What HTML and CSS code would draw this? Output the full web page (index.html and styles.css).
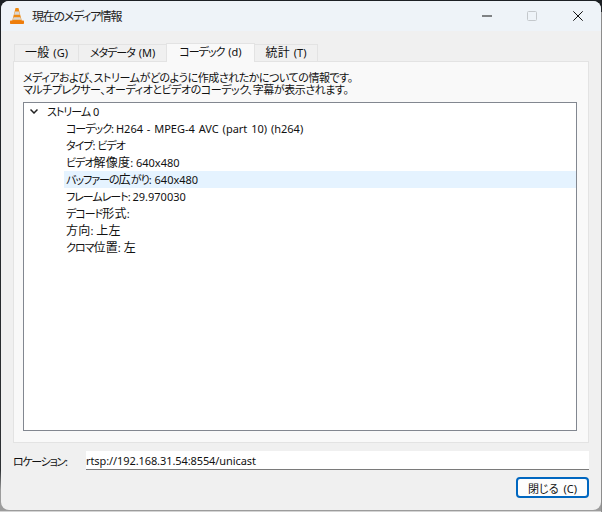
FILE: index.html
```html
<!DOCTYPE html>
<html lang="ja">
<head>
<meta charset="utf-8">
<title>現在のメディア情報</title>
<link rel="stylesheet" href="styles.css">
</head>
<body>
<div class="window">
  <header class="titlebar">
    <svg class="vlc" viewBox="0 0 14 16" width="14" height="16">
      <path d="M5.500 0h3l3.300 13H2.200z" fill="#f08a10"/>
      <path d="M5 3.600h4l.9 3.200H4.100z" fill="#d9d6d2"/>
      <path d="M3.600 9.300h6.800l.8 2.400H2.800z" fill="#d9d6d2"/>
      <path d="M1 12.500h12c.6 0 1 .4 1 1V15c0 .6-.4 1-1 1H1c-.6 0-1-.4-1-1v-1.500c0-.6.4-1 1-1z" fill="#ee7d0c"/>
    </svg>
    <span class="title">現在のメディア情報</span>
    <div class="controls">
      <svg class="min" width="10" height="10" viewBox="0 0 10 10"><path d="M0 5h10" stroke="#111" stroke-width="1"/></svg>
      <svg width="10" height="10" viewBox="0 0 10 10"><rect x=".5" y=".5" width="9" height="9" rx="1" fill="none" stroke="#c4c8cc"/></svg>
      <svg width="10" height="10" viewBox="0 0 10 10"><path d="M.3.300l9.400 9.400M9.700.300L.3 9.700" stroke="#111" stroke-width="1" fill="none"/></svg>
    </div>
  </header>
  <main class="content">
    <nav class="tabs">
      <div class="tab t1"><span class="kanji">一般</span> (G)</div>
      <div class="tab t2"><span class="kana">メタデータ</span> (M)</div>
      <div class="tab t3 active"><span class="kana">コーデック</span> (d)</div>
      <div class="tab t4"><span class="kanji">統計</span> (T)</div>
    </nav>
    <section class="pane">
      <p class="desc">メディアおよび、ストリームがどのように作成されたかについての情報です。<br>マルチプレクサー、オーディオとビデオのコーデック、字幕が表示されます。</p>
      <div class="tree">
        <div class="row root">
          <svg class="chev" width="8" height="5" viewBox="0 0 8 5"><path d="M.5.500L4 4 7.500.500" fill="none" stroke="#222" stroke-width="1.500"/></svg>
          <span><span class="kana">ストリーム</span> 0</span>
        </div>
        <div class="row leaf"><span class="kana">コーデック:</span> <span class="val">H264 - MPEG-4 AVC (part 10) (h264)</span></div>
        <div class="row leaf"><span class="kana">タイプ:</span> <span class="kana">ビデオ</span></div>
        <div class="row leaf"><span class="kana">ビデオ</span><span class="kanji">解像度</span>: 640x480</div>
        <div class="row leaf hover"><span class="kana">バッファーの</span><span class="kanji">広</span><span class="kana">がり</span>: 640x480</div>
        <div class="row leaf"><span class="kana">フレームレート:</span> 29.970030</div>
        <div class="row leaf"><span class="kana">デコード</span><span class="kanji">形式</span>:</div>
        <div class="row leaf"><span class="kanji">方向</span>: <span class="kanji">上左</span></div>
        <div class="row leaf"><span class="kana">クロマ</span><span class="kanji">位置</span>: <span class="kanji">左</span></div>
      </div>
    </section>
    <div class="location">
      <label class="loc-label"><span class="kana">ロケーション:</span></label>
      <div class="loc-input">rtsp://192.168.31.54:8554/unicast</div>
    </div>
    <div class="actions"><button class="close">閉じる (C)</button></div>
  </main>
</div>
</body>
</html>
```
FILE: styles.css
```css
* { box-sizing: border-box; }
html, body { margin: 0; height: 100%; }
body { width: 602px; height: 512px; overflow: hidden; background: linear-gradient(#8c8c8c, #8c8c8c) right 0 top 12px / 1px 100% no-repeat, linear-gradient(#1c2024 0, #2e3134 470px, #9c9c9c 490px, #9c9c9c 511px, #d4d4d4 511px); font-family: "Noto Sans", "Noto Sans CJK JP", sans-serif; font-size: 11px; color: #111; font-feature-settings: "palt"; font-kerning: normal; }
.window { margin-left: 1px; width: 600px; height: 509px; margin-top: 1px; background: #f0f0f0; border-radius: 8px; overflow: hidden; display: flex; flex-direction: column; }
.titlebar { height: 30px; background: #eef3f8; display: flex; align-items: center; padding-left: 9px; flex: none; }
.vlc { flex: none; }
.title { margin-left: 8px; font-size: 12px; color: #222; letter-spacing: -1.3px; }
.controls { margin-left: auto; display: flex; align-items: center; gap: 36px; padding-right: 18px; }
.min { margin-right: -1px; }
.content { flex: 1; padding: 13px 12px 0; display: flex; flex-direction: column; min-height: 0; }
.tabs { display: flex; height: 17px; padding-left: 2px; align-items: flex-end; flex: none; }
.tab { height: 17px; background: #f0f0f0; border: 1px solid #e3e3e3; border-bottom: 0; margin-left: -1px; line-height: 15px; white-space: nowrap; text-align: center; flex: none; word-spacing: 1px; }
.t1 { width: 65px; }
.t2 { width: 89px; }
.t3 { width: 89px; }
.t4 { width: 64px; }
.tab.active { height: 19px; background: #f9f9f9; position: relative; z-index: 1; margin-bottom: -1px; line-height: 16px; }
.kana { letter-spacing: -1px; }
.kanji { font-size: 12px; letter-spacing: .2px; }
.val { word-spacing: 1px; }
.pane { height: 382px; background: #f9f9f9; border: 1px solid #e3e3e3; padding: 10px 11px 11px 9px; display: flex; flex-direction: column; flex: none; }
.desc { margin: 0 0 6px; line-height: 12px; height: 24px; white-space: nowrap; letter-spacing: -.45px; }
.tree { flex: 1; background: #fff; border: 1px solid #828790; min-height: 0; }
.row { height: 17px; line-height: 17px; white-space: nowrap; }
.root { display: flex; align-items: center; padding-left: 6px; }
.chev { margin-right: 9px; flex: none; }
.leaf { padding-left: 42px; }
.hover { background: #e5f3ff; margin-left: 40px; padding-left: 2px; }
.location { display: flex; align-items: center; height: 19px; margin-top: 8px; flex: none; }
.loc-label { width: 73px; }
.loc-label .kana { letter-spacing: -1.3px; }
.loc-input { flex: 1; height: 19px; background: #fff; border-bottom: 1px solid #7a7a7a; line-height: 19px; letter-spacing: -.09px; }
.actions { display: flex; justify-content: flex-end; margin-top: 7px; flex: none; }
.close { width: 73px; height: 21px; background: #fdfdfd; border: 2px solid #0067c0; border-radius: 4px; font: inherit; font-feature-settings: inherit; word-spacing: 2px; padding: 0; color: #111; }
```
